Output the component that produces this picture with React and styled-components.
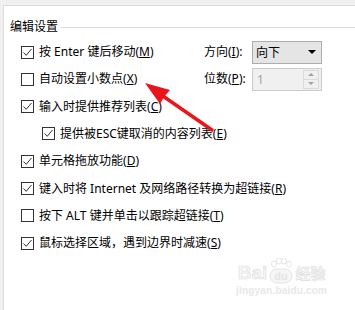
import React from "react";
import styled, { createGlobalStyle } from "styled-components";

const Global = createGlobalStyle`
  html, body { margin: 0; padding: 0; }
  body {
    width: 355px; height: 310px; overflow: hidden;
    background: #f0f0f0;
    font-family: "Noto Sans", "Noto Sans CJK SC", sans-serif;
    font-size: 12px; color: #000;
  }
`;

const Page = styled.div`
  position: relative;
  width: 355px;
  height: 310px;
  padding: 5px 0 0 3px;
  box-sizing: border-box;
`;

const Panel = styled.div`
  height: 100%;
  background: #fff;
  border-top: 1px solid #dcdcdc;
  border-left: 1px solid #dcdcdc;
  box-sizing: border-box;
`;

const TitleRow = styled.div`
  display: flex;
  align-items: center;
  height: 17px;
  margin-top: 12px;
  padding-left: 6px;
  gap: 3px;
`;

const TitleText = styled.span`
  line-height: 17px;
  white-space: nowrap;
`;

const TitleLine = styled.div`
  flex: 1;
  height: 1px;
  background: #dcdcdc;
  margin-top: 1px;
`;

const Rows = styled.div`
  display: flex;
  flex-direction: column;
  margin-top: 3.4px;
  padding-left: 17px;
`;

const Row = styled.div`
  display: flex;
  align-items: center;
  height: 27.3px;
  padding-left: ${(p) => (p.$indent ? 21 : 0)}px;
`;

const Option = styled.label`
  display: flex;
  align-items: center;
  width: ${(p) => (p.$fixed ? "183px" : "auto")};
  white-space: nowrap;
  line-height: 16px;
`;

const Box = styled.span`
  display: inline-flex;
  align-items: center;
  justify-content: center;
  width: 13px;
  height: 13px;
  box-sizing: border-box;
  border: 1px solid #333;
  background: #fff;
  margin-right: 5px;
  flex: none;
`;

const FieldLabel = styled.span`
  width: 48px;
  white-space: nowrap;
  line-height: 16px;
`;

const Select = styled.div`
  width: 70px;
  height: 23px;
  box-sizing: border-box;
  border: 1px solid #adadad;
  background: #e5e5e5;
  display: flex;
  align-items: center;
  justify-content: space-between;
  padding: 0 4px 0 3px;
`;

const Caret = styled.span`
  width: 0;
  height: 0;
  border-left: 4px solid transparent;
  border-right: 4px solid transparent;
  border-top: 4px solid #000;
  margin-right: 1px;
`;

const Spin = styled.div`
  width: 70px;
  height: 23px;
  box-sizing: border-box;
  border: 1px solid #cccccc;
  background: #f0f0f0;
  display: flex;
  align-items: stretch;
`;

const SpinValue = styled.span`
  flex: 1;
  color: #a0a0a0;
  padding-left: 4px;
  line-height: 21px;
`;

const SpinButtons = styled.div`
  width: 14px;
  margin: 1px 2px 1px 0;
  display: flex;
  flex-direction: column;
  border: 1px solid #dadada;
`;

const SpinBtn = styled.div`
  flex: 1;
  display: flex;
  align-items: center;
  justify-content: center;
  border-top: ${(p) => (p.$down ? "1px solid #dadada" : "none")};
`;

const Tri = styled.span`
  width: 0;
  height: 0;
  border-left: 3px solid transparent;
  border-right: 3px solid transparent;
  ${(p) =>
    p.$down
      ? "border-top: 3px solid #a0a0a0;"
      : "border-bottom: 3px solid #a0a0a0;"}
`;

const Overlay = styled.svg`
  position: absolute;
  left: 0;
  top: 0;
  pointer-events: none;
`;

const Watermark = styled.div`
  position: absolute;
  left: 236px;
  top: 258px;
  color: #e6e6e6;
  pointer-events: none;
  display: flex;
  flex-direction: column;
  align-items: center;
`;

const WmTop = styled.div`
  display: flex;
  align-items: flex-end;
  gap: 2px;
  font-family: "Liberation Sans", sans-serif;
  font-weight: bold;
  font-size: 19px;
  line-height: 22px;
  -webkit-text-stroke: 0.6px #dedede;
  color: #f6f6f6;
`;

const WmCjk = styled.span`
  font-family: "Noto Sans CJK SC", sans-serif;
  font-size: 15px;
  font-weight: bold;
`;

const WmSub = styled.div`
  font-family: "Liberation Sans", sans-serif;
  font-size: 10px;
  font-weight: bold;
  color: #e8e8e8;
  margin-top: 1px;
  letter-spacing: 0.2px;
`;

const Check = ({ on }) => (
  <Box>
    {on && (
      <svg width="11" height="11" viewBox="0 0 11 11">
        <polyline
          points="1.5,5.5 4.2,8.3 9.5,2"
          fill="none"
          stroke="#333"
          strokeWidth="1"
        />
      </svg>
    )}
  </Box>
);

const Paw = () => (
  <svg width="24" height="26" viewBox="0 0 24 26">
    <g fill="none" stroke="#dedede" strokeWidth="0.8">
      <ellipse cx="5" cy="6" rx="2.5" ry="3" />
      <ellipse cx="10" cy="3" rx="2.5" ry="3" />
      <ellipse cx="15" cy="3" rx="2.5" ry="3" />
      <ellipse cx="20" cy="6" rx="2.5" ry="3" />
      <rect x="1" y="11" width="22" height="14" rx="7" fill="#f6f6f6" />
    </g>
    <text
      x="12"
      y="22"
      textAnchor="middle"
      fontFamily="Liberation Sans, sans-serif"
      fontWeight="bold"
      fontSize="11"
      fill="#e4e4e4"
    >
      du
    </text>
  </svg>
);

const options = [
  { text: "按 Enter 键后移动", key: "M", on: true, field: "dir" },
  { text: "自动设置小数点", key: "X", on: false, field: "digits" },
  { text: "输入时提供推荐列表", key: "C", on: true },
  { text: "提供被ESC键取消的内容列表", key: "E", on: true, indent: true },
  { text: "单元格拖放功能", key: "D", on: true },
  { text: "键入时将 Internet 及网络路径转换为超链接", key: "R", on: true },
  { text: "按下 ALT 键并单击以跟踪超链接", key: "T", on: false },
  { text: "鼠标选择区域，遇到边界时减速", key: "S", on: true },
];

export default function App() {
  return (
    <>
      <Global />
      <Page>
        <Panel>
          <TitleRow>
            <TitleText>编辑设置</TitleText>
            <TitleLine />
          </TitleRow>
          <Rows>
            {options.map((o) => (
              <Row key={o.key} $indent={o.indent}>
                <Option $fixed={!!o.field}>
                  <Check on={o.on} />
                  <span>
                    {o.text}(<u>{o.key}</u>)
                  </span>
                </Option>
                {o.field === "dir" && (
                  <>
                    <FieldLabel>
                      方向(<u>I</u>):
                    </FieldLabel>
                    <Select>
                      <span>向下</span>
                      <Caret />
                    </Select>
                  </>
                )}
                {o.field === "digits" && (
                  <>
                    <FieldLabel>
                      位数(<u>P</u>):
                    </FieldLabel>
                    <Spin>
                      <SpinValue>1</SpinValue>
                      <SpinButtons>
                        <SpinBtn>
                          <Tri />
                        </SpinBtn>
                        <SpinBtn $down>
                          <Tri $down />
                        </SpinBtn>
                      </SpinButtons>
                    </Spin>
                  </>
                )}
              </Row>
            ))}
          </Rows>
        </Panel>
        <Watermark>
          <WmTop>
            <span>Bai</span>
            <Paw />
            <WmCjk>经验</WmCjk>
          </WmTop>
          <WmSub>jingyan.baidu.com</WmSub>
        </Watermark>
        <Overlay width="355" height="310" viewBox="0 0 355 310">
          <line
            x1="212"
            y1="130"
            x2="160"
            y2="94"
            stroke="#e8161b"
            strokeWidth="3.5"
            strokeLinecap="round"
          />
          <polygon
            points="145,83 170,90 164,97 160,104"
            fill="#e8161b"
          />
        </Overlay>
      </Page>
    </>
  );
}
